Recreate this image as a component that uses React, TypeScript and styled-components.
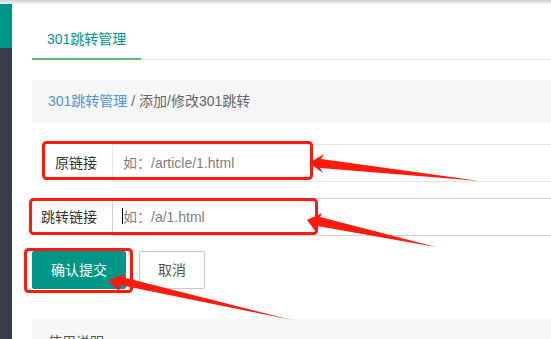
import React from "react";
import styled, { createGlobalStyle } from "styled-components";

const GlobalStyle = createGlobalStyle`
    * {
        box-sizing: border-box;
    }
    body {
        margin: 0;
        font-family: "Liberation Sans", "Noto Sans CJK SC", sans-serif;
        font-size: 14px;
        color: #333;
        background: #fff;
    }
`;

const PageCSS = styled.div`
    position: relative;
    height: 100vh;
    overflow: hidden;
    display: flex;
    flex-direction: column;
`;

const TopShadow = styled.div`
    height: 4px;
    flex-shrink: 0;
    background: linear-gradient(#cfcfcf, #f7f7f7);
`;

const BodyRow = styled.div`
    flex: 1;
    display: flex;
`;

const Sidebar = styled.div`
    width: 12px;
    flex-shrink: 0;
    display: flex;
    flex-direction: column;
    background: #393d49;
`;

const SidebarLogo = styled.div`
    height: 44px;
    background: #009688;
`;

const Main = styled.div`
    flex: 1;
    margin-right: -40px;
    padding: 16px 0 0 20px;
`;

const TabTitle = styled.ul`
    display: flex;
    height: 40px;
    margin: 0;
    padding: 0;
    list-style: none;
    border-bottom: 1px solid #e2e2e2;
`;

const TabItem = styled.li<{ $active?: boolean }>`
    height: 40px;
    padding: 0 15px;
    line-height: 38px;
    color: ${(p) => (p.$active ? "#009688" : "#333")};
    border-bottom: 2px solid ${(p) => (p.$active ? "#5fb878" : "transparent")};
`;

const QuoteBox = styled.div<{ $top: number }>`
    margin-top: ${(p) => p.$top}px;
    padding: 11px 16px;
    line-height: 21px;
    background: #f6f6f6;
    color: #666;
`;

const CrumbLink = styled.span`
    color: #4f93dc;
`;

const FormCSS = styled.form`
    margin-top: 21px;
`;

const FormItem = styled.div<{ $gap: number }>`
    display: flex;
    height: 38px;
    margin-bottom: ${(p) => p.$gap}px;
`;

const Label = styled.label`
    width: 80px;
    flex-shrink: 0;
    padding-right: 15px;
    line-height: 38px;
    text-align: right;
    color: #333;
`;

const InputWrap = styled.div`
    position: relative;
    flex: 1;
    display: flex;
`;

const TextInput = styled.input<{ $hover?: boolean }>`
    flex: 1;
    height: 38px;
    padding: 0 10px;
    border: 1px solid ${(p) => (p.$hover ? "#d2d2d2" : "#e6e6e6")};
    outline: none;
    font: inherit;
    color: #333;
    background: #fff;

    &::placeholder {
        color: #808080;
    }
`;

const Caret = styled.span`
    position: absolute;
    left: 10px;
    top: 10px;
    width: 1px;
    height: 16px;
    background: #000;
`;

const ButtonRow = styled.div`
    display: flex;
    gap: 13px;
    margin-bottom: 30px;
`;

const Button = styled.button<{ $primary?: boolean }>`
    height: 38px;
    padding: 0 18px;
    border-radius: 2px;
    font: inherit;
    line-height: 36px;
    cursor: pointer;
    border: 1px solid ${(p) => (p.$primary ? "#009688" : "#c9c9c9")};
    background: ${(p) => (p.$primary ? "#009688" : "#fff")};
    color: ${(p) => (p.$primary ? "#fff" : "#555")};
`;

const HelpBox = styled.div`
    padding: 13px 16px;
    line-height: 20px;
    background: #f6f6f6;
    color: #555;
`;

const Annotations = styled.svg`
    position: absolute;
    left: 0;
    top: 0;
    pointer-events: none;
`;

const RED = "#ff1a0e";

const boxes = [
    { x: 43.5, y: 142.5, w: 268, h: 36 },
    { x: 30.5, y: 199.5, w: 286, h: 34 },
    { x: 25.5, y: 249.5, w: 106, h: 42 },
];

const arrows = [
    "309,163 324,154 321,159 480,181 320,168 323,173",
    "307,220 322,213 320,217 436,247 317,226 316,232",
    "108,281 125,273 122,277 292,320 120,285 119,291",
];

const App: React.FC = () => {
    return (
        <PageCSS>
            <GlobalStyle />
            <TopShadow />
            <BodyRow>
                <Sidebar>
                    <SidebarLogo />
                </Sidebar>
                <Main>
                    <TabTitle>
                        <TabItem $active>301跳转管理</TabItem>
                    </TabTitle>
                    <QuoteBox $top={20}>
                        <CrumbLink>301跳转管理</CrumbLink> / 添加/修改301跳转
                    </QuoteBox>
                    <FormCSS onSubmit={(e) => e.preventDefault()}>
                        <FormItem $gap={16}>
                            <Label>原链接</Label>
                            <InputWrap>
                                <TextInput placeholder="如：/article/1.html" />
                            </InputWrap>
                        </FormItem>
                        <FormItem $gap={15}>
                            <Label>跳转链接</Label>
                            <InputWrap>
                                <TextInput $hover placeholder="如：/a/1.html" />
                                <Caret />
                            </InputWrap>
                        </FormItem>
                        <ButtonRow>
                            <Button $primary type="submit">确认提交</Button>
                            <Button type="button">取消</Button>
                        </ButtonRow>
                    </FormCSS>
                    <HelpBox>使用说明</HelpBox>
                </Main>
            </BodyRow>

            {/* 标注：红框和箭头 */}
            <Annotations width={551} height={339} viewBox="0 0 551 339">
                {boxes.map((b, i) => (
                    <rect
                        key={i}
                        x={b.x}
                        y={b.y}
                        width={b.w}
                        height={b.h}
                        rx={3}
                        fill="none"
                        stroke={RED}
                        strokeWidth={3}
                    />
                ))}
                {arrows.map((pts, i) => (
                    <polygon key={i} points={pts} fill={RED} />
                ))}
            </Annotations>
        </PageCSS>
    );
};

export default App;
